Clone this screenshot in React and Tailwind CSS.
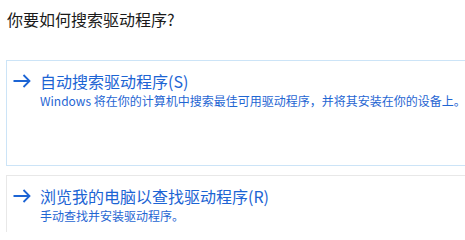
import React from 'react';

const Arrow = () => (
  <svg width="18" height="14" viewBox="0 0 18 14" className="shrink-0">
    <path d="M0.5 7 H16.5 M10.5 1 L16.5 7 L10.5 13" fill="none" stroke="#1c64d4" strokeWidth="1.8" />
  </svg>
);

const Option = ({ title, desc, active, className = '' }) => (
  <div
    className={`ml-[6px] w-[500px] h-[106px] border bg-white ${active ? 'border-[#cce4f7]' : 'border-[#e8e8e8]'} ${className}`}
  >
    <div className="flex items-center gap-[9px] pl-[6px] pt-[10px]">
      <Arrow />
      <span className="text-[16px] leading-[20px] text-[#1c64d4]">{title}</span>
    </div>
    <p className="mt-[2px] pl-[33px] text-[12px] leading-[16px] text-[#1f66d3]">{desc}</p>
  </div>
);

export default function App() {
  return (
    <div
      className="w-[465px] h-[232px] overflow-hidden bg-white"
      style={{ fontFamily: '"Noto Sans CJK SC", "Noto Sans", sans-serif' }}
    >
      <h1 className="pl-[7px] pt-[8px] text-[16px] leading-[22px] font-normal text-[#1a1a1a]">
        你要如何搜索驱动程序?
      </h1>
      {/* options */}
      <div className="mt-[30px]">
        <Option
          active
          title="自动搜索驱动程序(S)"
          desc="Windows 将在你的计算机中搜索最佳可用驱动程序，并将其安装在你的设备上。"
        />
        <Option
          className="mt-[9px]"
          title="浏览我的电脑以查找驱动程序(R)"
          desc="手动查找并安装驱动程序。"
        />
      </div>
    </div>
  );
}
